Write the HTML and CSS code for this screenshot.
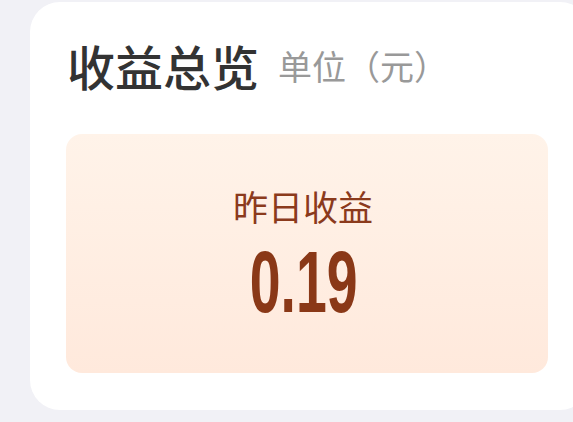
FILE: index.html
```html
<!DOCTYPE html>
<html lang="zh">
<head>
<meta charset="utf-8">
<link rel="stylesheet" href="styles.css">
</head>
<body>
<div class="page">
  <section class="card">
    <header class="head">
      <h1 class="title">收益总览</h1>
      <span class="unit">单位（元）</span>
    </header>
    <div class="stat">
      <div class="stat-label">昨日收益</div>
      <div class="stat-value">0.19</div>
    </div>
  </section>
</div>
</body>
</html>
```
FILE: styles.css
```css
html, body {
  margin: 0;
  padding: 0;
}
body {
  background: #f1f1f6;
  width: 573px;
  height: 422px;
  overflow: hidden;
  font-family: "Noto Sans CJK SC", "Noto Sans", sans-serif;
}
.page {
  padding: 2px 0 0 30px;
}
.card {
  width: 560px;
  height: 408px;
  box-sizing: border-box;
  background: #ffffff;
  border-radius: 30px;
  padding: 30px 42px 0 36px;
}
.head {
  display: flex;
  align-items: center;
  gap: 19px;
  height: 66px;
  padding-left: 1px;
}
.title {
  margin: 0;
  font-size: 48px;
  font-weight: 500;
  color: #333333;
  line-height: 60px;
}
.unit {
  font-size: 34px;
  color: #999999;
  line-height: 60px;
  margin-top: 2px;
}
.stat {
  margin-top: 36px;
  height: 239px;
  border-radius: 16px;
  background: linear-gradient(180deg, #fff3e9 0%, #ffe9dc 100%);
  display: flex;
  flex-direction: column;
  align-items: center;
  box-sizing: border-box;
  padding-top: 52px;
}
.stat-label {
  font-size: 35px;
  line-height: 40px;
  color: #8b3a1c;
  margin-right: 8px;
}
.stat-value {
  font-family: "Liberation Sans Narrow", "Liberation Sans", sans-serif;
  font-weight: 700;
  font-size: 88px;
  line-height: 66px;
  margin-top: 23px;
  color: #8a3817;
  transform: scaleX(0.63);
  margin-right: 6px;
}
```
